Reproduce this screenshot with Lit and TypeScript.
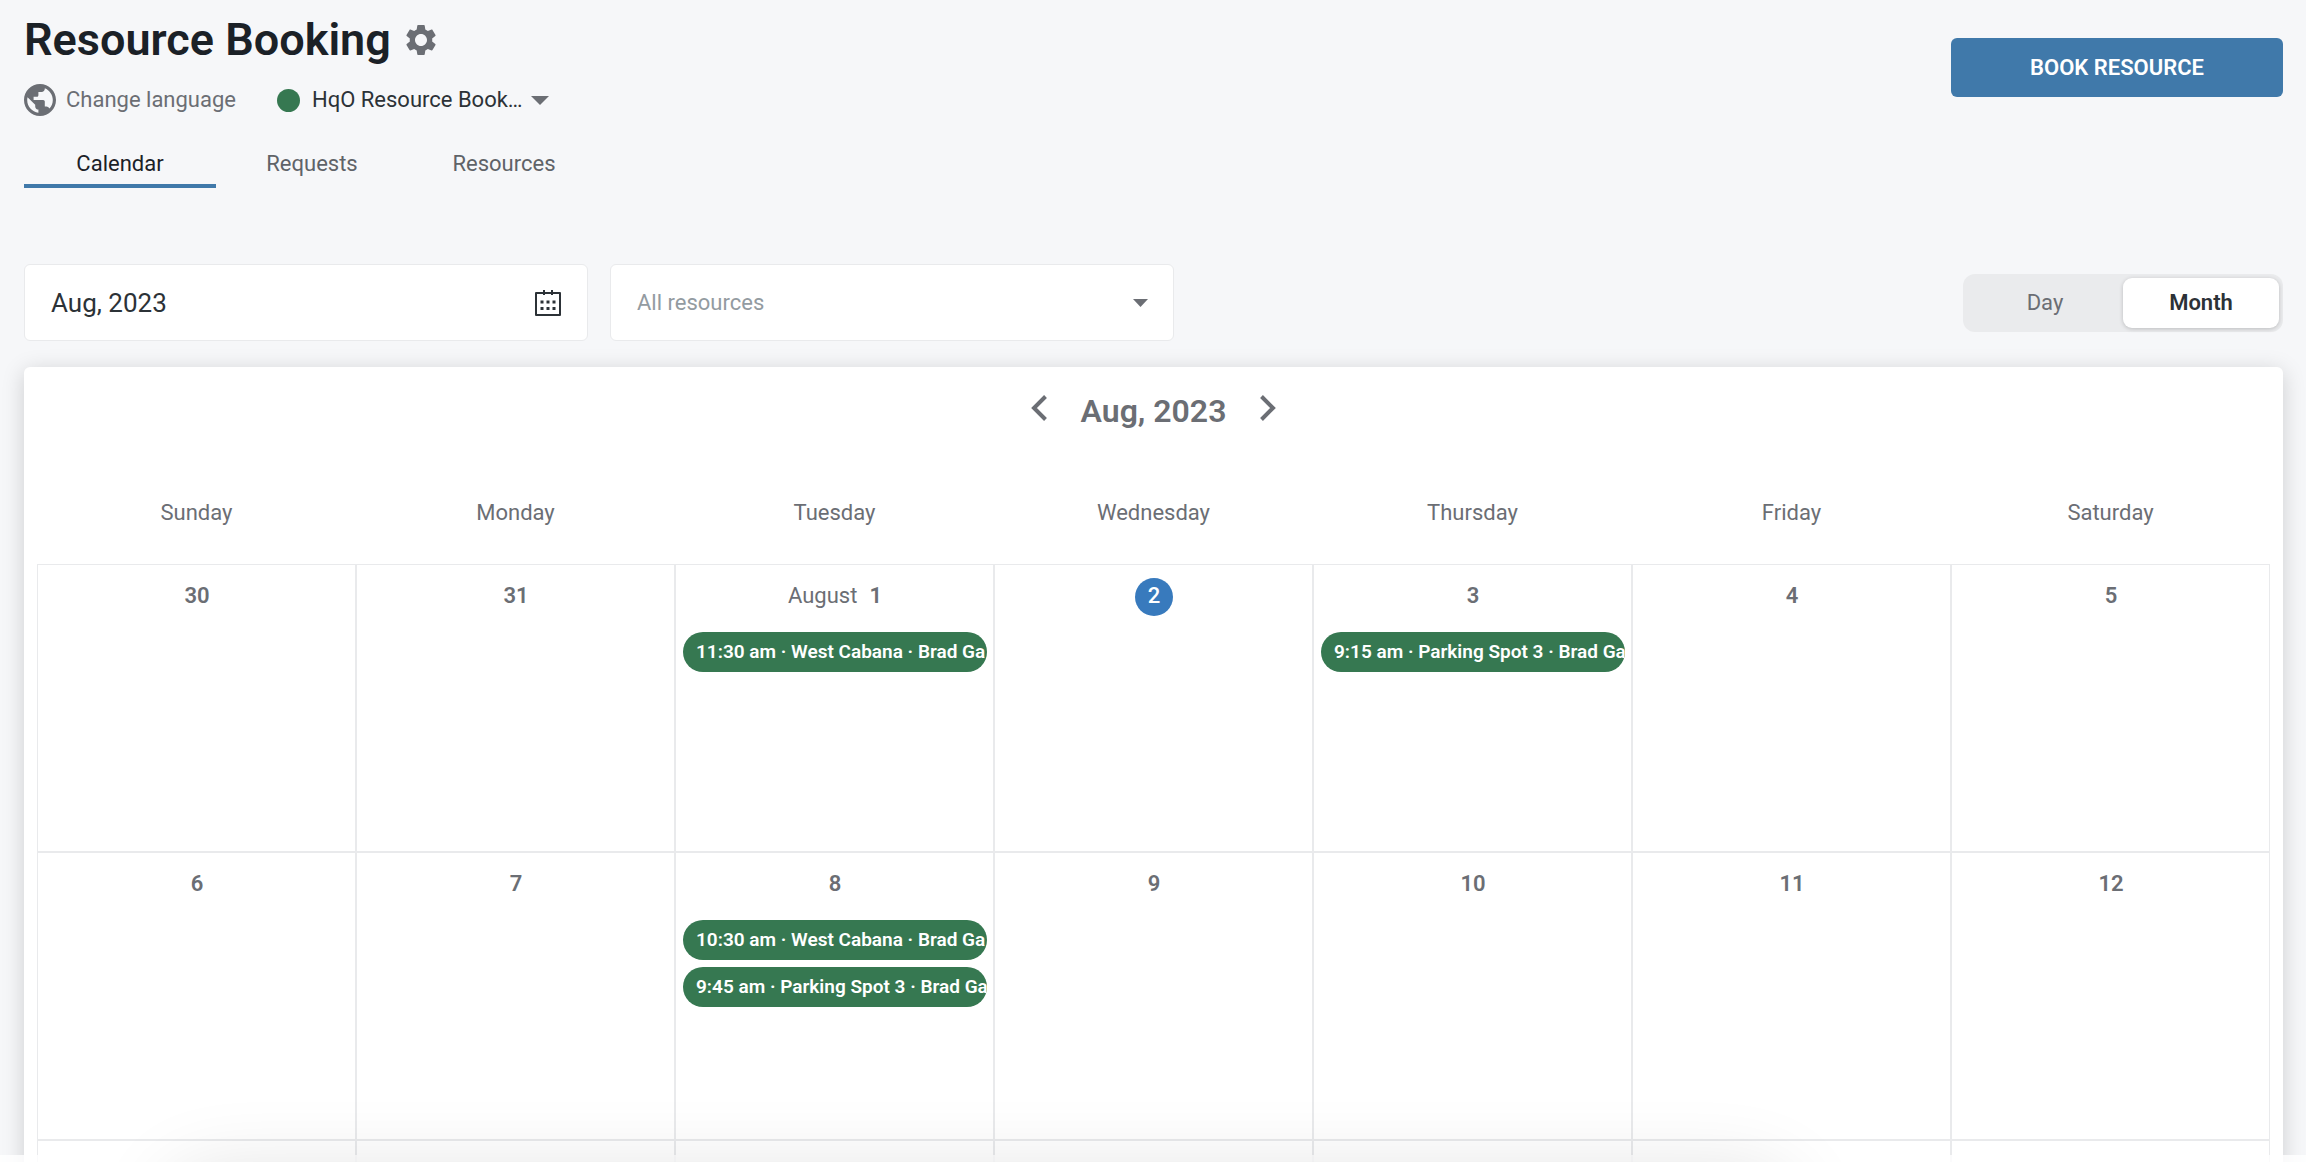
import { LitElement, html, css, nothing } from "lit";
import { customElement, property, state } from "lit/decorators.js";
import { classMap } from "lit/directives/class-map.js";

interface Booking {
  time: string;
  resource: string;
  guest: string;
}

interface Day {
  label: string;
  month?: string;
  today?: boolean;
  bookings?: Booking[];
}

const WEEKDAYS = ["Sunday", "Monday", "Tuesday", "Wednesday", "Thursday", "Friday", "Saturday"];

const WEEKS: Day[][] = [
  [
    { label: "30" },
    { label: "31" },
    { label: "1", month: "August", bookings: [{ time: "11:30 am", resource: "West Cabana", guest: "Brad Ga" }] },
    { label: "2", today: true },
    { label: "3", bookings: [{ time: "9:15 am", resource: "Parking Spot 3", guest: "Brad Ga" }] },
    { label: "4" },
    { label: "5" },
  ],
  [
    { label: "6" },
    { label: "7" },
    {
      label: "8",
      bookings: [
        { time: "10:30 am", resource: "West Cabana", guest: "Brad Ga" },
        { time: "9:45 am", resource: "Parking Spot 3", guest: "Brad Ga" },
      ],
    },
    { label: "9" },
    { label: "10" },
    { label: "11" },
    { label: "12" },
  ],
  Array.from({ length: 7 }, () => ({ label: "" })),
];

const TABS = ["Calendar", "Requests", "Resources"];

@customElement("month-calendar")
export class MonthCalendar extends LitElement {
  @property() heading = "";
  @property({ attribute: false }) weeks: Day[][] = [];

  static styles = css`
    :host {
      display: block;
      padding: 22px 13px 0;
      background: #fff;
      border-radius: 6px;
      box-shadow: 0 4px 22px rgba(0, 0, 0, 0.17);
      color: #6b6e74;
    }
    .nav {
      display: flex;
      justify-content: center;
      align-items: flex-start;
      gap: 32px;
      height: 71px;
    }
    .title {
      margin: 0;
      font-size: 32px;
      font-weight: 600;
      line-height: 44px;
    }
    .arrow {
      display: flex;
      align-items: center;
      height: 38px;
      padding: 0;
      border: 0;
      background: none;
      color: inherit;
      cursor: pointer;
    }
    .arrow svg {
      display: block;
      width: 20px;
      height: 26px;
    }
    .month {
      width: 100%;
      table-layout: fixed;
      border-spacing: 0;
    }
    .weekday {
      box-sizing: border-box;
      height: 104px;
      padding: 2px 0 0;
      font-size: 22px;
      font-weight: 400;
      line-height: 32px;
    }
    .cell {
      box-sizing: border-box;
      height: 288px;
      padding: 13px 6px 0 7px;
      border: 1px solid #e9eaec;
      vertical-align: top;
      font-size: 22px;
    }
    .date {
      display: flex;
      justify-content: center;
      gap: 12px;
      height: 38px;
      margin-bottom: 16px;
      line-height: 36px;
    }
    .number {
      font-weight: 600;
    }
    .today {
      width: 38px;
      height: 38px;
      border-radius: 50%;
      background: #387abd;
      color: #fff;
      font-weight: 500;
      text-align: center;
    }
    .booking {
      display: block;
      width: 100%;
      height: 40px;
      margin-bottom: 7px;
      padding: 0 0 0 13px;
      overflow: hidden;
      border: 0;
      border-radius: 20px;
      background: #367851;
      color: #fff;
      font: 600 19px/38px Roboto, sans-serif;
      text-align: left;
      white-space: nowrap;
      cursor: pointer;
    }
  `;

  private renderDay(day: Day) {
    return html`<td class="cell">
      ${day.label
        ? html`<div class="date">
            ${day.month ? html`<span>${day.month}</span>` : nothing}
            <span class=${classMap({ number: true, today: !!day.today })}>${day.label}</span>
          </div>`
        : nothing}
      ${day.bookings?.map(
        (b) => html`<button class="booking" type="button">${b.time} · ${b.resource} · ${b.guest}</button>`,
      )}
    </td>`;
  }

  render() {
    return html`
      <div class="nav">
        <button class="arrow" type="button" aria-label="Previous month">
          <svg viewBox="0 0 20 26"><path d="M16.500 1.500 5 13l11.500 11.500" fill="none" stroke="currentColor" stroke-width="4" /></svg>
        </button>
        <h2 class="title">${this.heading}</h2>
        <button class="arrow" type="button" aria-label="Next month">
          <svg viewBox="0 0 20 26"><path d="M3.500 1.500 15 13 3.500 24.500" fill="none" stroke="currentColor" stroke-width="4" /></svg>
        </button>
      </div>
      <table class="month">
        <thead>
          <tr>
            ${WEEKDAYS.map((d) => html`<th class="weekday" scope="col">${d}</th>`)}
          </tr>
        </thead>
        <tbody>
          ${this.weeks.map((week) => html`<tr>${week.map((day) => this.renderDay(day))}</tr>`)}
        </tbody>
      </table>
    `;
  }
}

@customElement("app-root")
export class AppRoot extends LitElement {
  @state() private tab = "Calendar";
  @state() private view = "Month";

  static styles = css`
    :host {
      display: block;
      position: relative;
      box-sizing: border-box;
      height: 100vh;
      overflow: hidden;
      padding: 16px 23px 0 24px;
      background: #f6f7f9;
      color: #2c3237;
      font-family: Roboto, sans-serif;
      font-size: 22px;
      line-height: 32px;
    }
    button,
    input,
    select {
      font: inherit;
      color: inherit;
    }
    button {
      padding: 0;
      border: 0;
      background: none;
      cursor: pointer;
    }
    select {
      appearance: none;
      padding: 0;
      border: 0;
      background: none;
      cursor: pointer;
    }
    svg {
      display: block;
      flex: none;
    }
    .header {
      display: flex;
      justify-content: space-between;
      align-items: flex-start;
    }
    .heading {
      display: flex;
      align-items: center;
      gap: 12px;
    }
    .title {
      margin: 0;
      color: #1b2127;
      font-size: 45px;
      font-weight: 600;
      line-height: 48px;
    }
    .muted {
      color: #6b6e74;
    }
    .context {
      display: flex;
      align-items: center;
      gap: 41px;
      margin-top: 20px;
    }
    .language {
      display: flex;
      align-items: center;
      gap: 10px;
      color: #6b6e74;
    }
    .portal {
      display: flex;
      align-items: center;
      gap: 12px;
    }
    .dot {
      width: 23px;
      height: 23px;
      border-radius: 50%;
      background: #367851;
    }
    .picker {
      display: flex;
      align-items: center;
      gap: 8px;
    }
    .tabs {
      display: flex;
      margin-top: 26px;
    }
    .tab {
      width: 192px;
      height: 46px;
      border-bottom: 4px solid transparent;
      color: #5f6368;
      line-height: 44px;
    }
    .tab.active {
      border-color: #4079aa;
      color: #1b2127;
    }
    .book {
      width: 332px;
      height: 59px;
      margin-top: 22px;
      border-radius: 6px;
      background: #4079aa;
      color: #fff;
      font-weight: 600;
    }
    .filters {
      display: flex;
      align-items: center;
      gap: 22px;
      margin: 76px 0 26px;
    }
    .field {
      box-sizing: border-box;
      display: flex;
      flex: 0 1 564px;
      align-items: center;
      height: 77px;
      padding: 0 25px 0 26px;
      border: 1px solid #e9eaec;
      border-radius: 6px;
      background: #fff;
    }
    .date {
      flex: 1;
      min-width: 0;
      padding: 0;
      border: 0;
      outline: 0;
      background: none;
      font-size: 26px;
    }
    .resources {
      flex: 1;
      min-width: 0;
      color: #939ba1;
    }
    .toggle {
      box-sizing: border-box;
      display: flex;
      width: 320px;
      height: 58px;
      margin-left: auto;
      padding: 4px;
      border-radius: 12px;
      background: #eaebed;
    }
    .view {
      flex: 1;
      border-radius: 9px;
      color: #6b6e74;
    }
    .view.active {
      background: #fff;
      box-shadow: 0 1px 4px rgba(0, 0, 0, 0.2);
      color: #2c3237;
      font-weight: 600;
    }
    .footer {
      position: absolute;
      right: 0;
      bottom: 0;
      left: 0;
      height: 7px;
      background: rgba(255, 255, 255, 0.82);
    }
    .glow {
      position: absolute;
      right: 23%;
      bottom: -90px;
      left: 8%;
      height: 60px;
      border-radius: 50px;
      box-shadow: 0 0 80px 20px rgba(0, 0, 0, 0.12);
    }
  `;

  render() {
    return html`
      <header class="header">
        <div>
          <div class="heading">
            <h1 class="title">Resource Booking</h1>
            <button class="muted" type="button" aria-label="Settings">
              <svg width="36" height="36" viewBox="0 0 24 24" fill="currentColor">
                <path
                  d="M19.430 12.980c.04-.32.07-.64.07-.98s-.03-.66-.07-.98l2.110-1.650c.19-.15.24-.42.12-.64l-2-3.460c-.12-.22-.39-.3-.61-.22l-2.490 1c-.52-.4-1.080-.73-1.690-.98l-.38-2.650C14.460 2.180 14.250 2 14 2h-4c-.25 0-.46.18-.49.42l-.38 2.650c-.61.25-1.170.59-1.690.98l-2.490-1c-.23-.09-.49 0-.61.22l-2 3.460c-.13.22-.07.49.12.64l2.110 1.650c-.04.32-.07.65-.07.98s.03.66.07.98l-2.110 1.650c-.19.15-.24.42-.12.64l2 3.460c.12.22.39.3.61.22l2.490-1c.52.4 1.080.73 1.690.98l.38 2.650c.03.24.24.42.49.42h4c.25 0 .46-.18.49-.42l.38-2.650c.61-.25 1.170-.59 1.690-.98l2.490 1c.23.09.49 0 .61-.22l2-3.460c.12-.22.07-.49-.12-.64l-2.110-1.650zM12 16c-2.210 0-4-1.790-4-4s1.790-4 4-4 4 1.790 4 4-1.790 4-4 4z"
                />
              </svg>
            </button>
          </div>
          <div class="context">
            <button class="language" type="button">
              <svg width="32" height="32" viewBox="2 2 20 20" fill="currentColor">
                <path
                  d="M12 2C6.480 2 2 6.480 2 12s4.480 10 10 10 10-4.480 10-10S17.520 2 12 2zm-1 17.930c-3.950-.49-7-3.850-7-7.930 0-.62.08-1.210.21-1.790L9 15v1c0 1.100.9 2 2 2v1.930zm6.900-2.540c-.26-.81-1-1.390-1.900-1.390h-1v-3c0-.55-.45-1-1-1H8v-2h2c.55 0 1-.45 1-1V7h2c1.100 0 2-.9 2-2v-.41c2.930 1.190 5 4.060 5 7.410 0 2.080-.8 3.970-2.100 5.390z"
                />
              </svg>
              Change language
            </button>
            <div class="portal">
              <span class="dot"></span>
              <label class="picker">
                <select aria-label="Portal">
                  <option>HqO Resource Book…</option>
                </select>
                <svg class="muted" width="18" height="9" viewBox="0 0 18 9" fill="currentColor"><path d="M0 0h18L9 9z" /></svg>
              </label>
            </div>
          </div>
          <nav class="tabs" role="tablist" aria-label="Sections">
            ${TABS.map(
              (name) => html`<button
                class=${classMap({ tab: true, active: this.tab === name })}
                type="button"
                role="tab"
                aria-selected=${this.tab === name ? "true" : "false"}
                @click=${() => (this.tab = name)}
              >
                ${name}
              </button>`,
            )}
          </nav>
        </div>
        <button class="book" type="button">BOOK RESOURCE</button>
      </header>

      <section class="filters" aria-label="Filters">
        <label class="field">
          <input class="date" type="text" aria-label="Month" value="Aug, 2023" />
          <svg width="28" height="28" viewBox="0 0 28 28" fill="none" stroke="currentColor" stroke-width="2">
            <path d="M2 4h24v22H2zM10 1v5M18 1v5" stroke-linejoin="round" />
            <path d="M6.500 13h3M12.500 13h3M18.500 13h3M6.500 19.500h3M12.500 19.500h3M18.500 19.500h3" stroke-width="3" />
          </svg>
        </label>
        <label class="field">
          <select class="resources" aria-label="Resources">
            <option>All resources</option>
          </select>
          <svg class="muted" width="15" height="8" viewBox="0 0 15 8" fill="currentColor"><path d="M0 0h15L7.500 8z" /></svg>
        </label>
        <div class="toggle" role="group" aria-label="View">
          ${["Day", "Month"].map(
            (name) => html`<button
              class=${classMap({ view: true, active: this.view === name })}
              type="button"
              aria-pressed=${this.view === name ? "true" : "false"}
              @click=${() => (this.view = name)}
            >
              ${name}
            </button>`,
          )}
        </div>
      </section>

      <month-calendar heading="Aug, 2023" .weeks=${WEEKS}></month-calendar>
      <div class="footer"></div>
      <div class="glow"></div>
    `;
  }
}
